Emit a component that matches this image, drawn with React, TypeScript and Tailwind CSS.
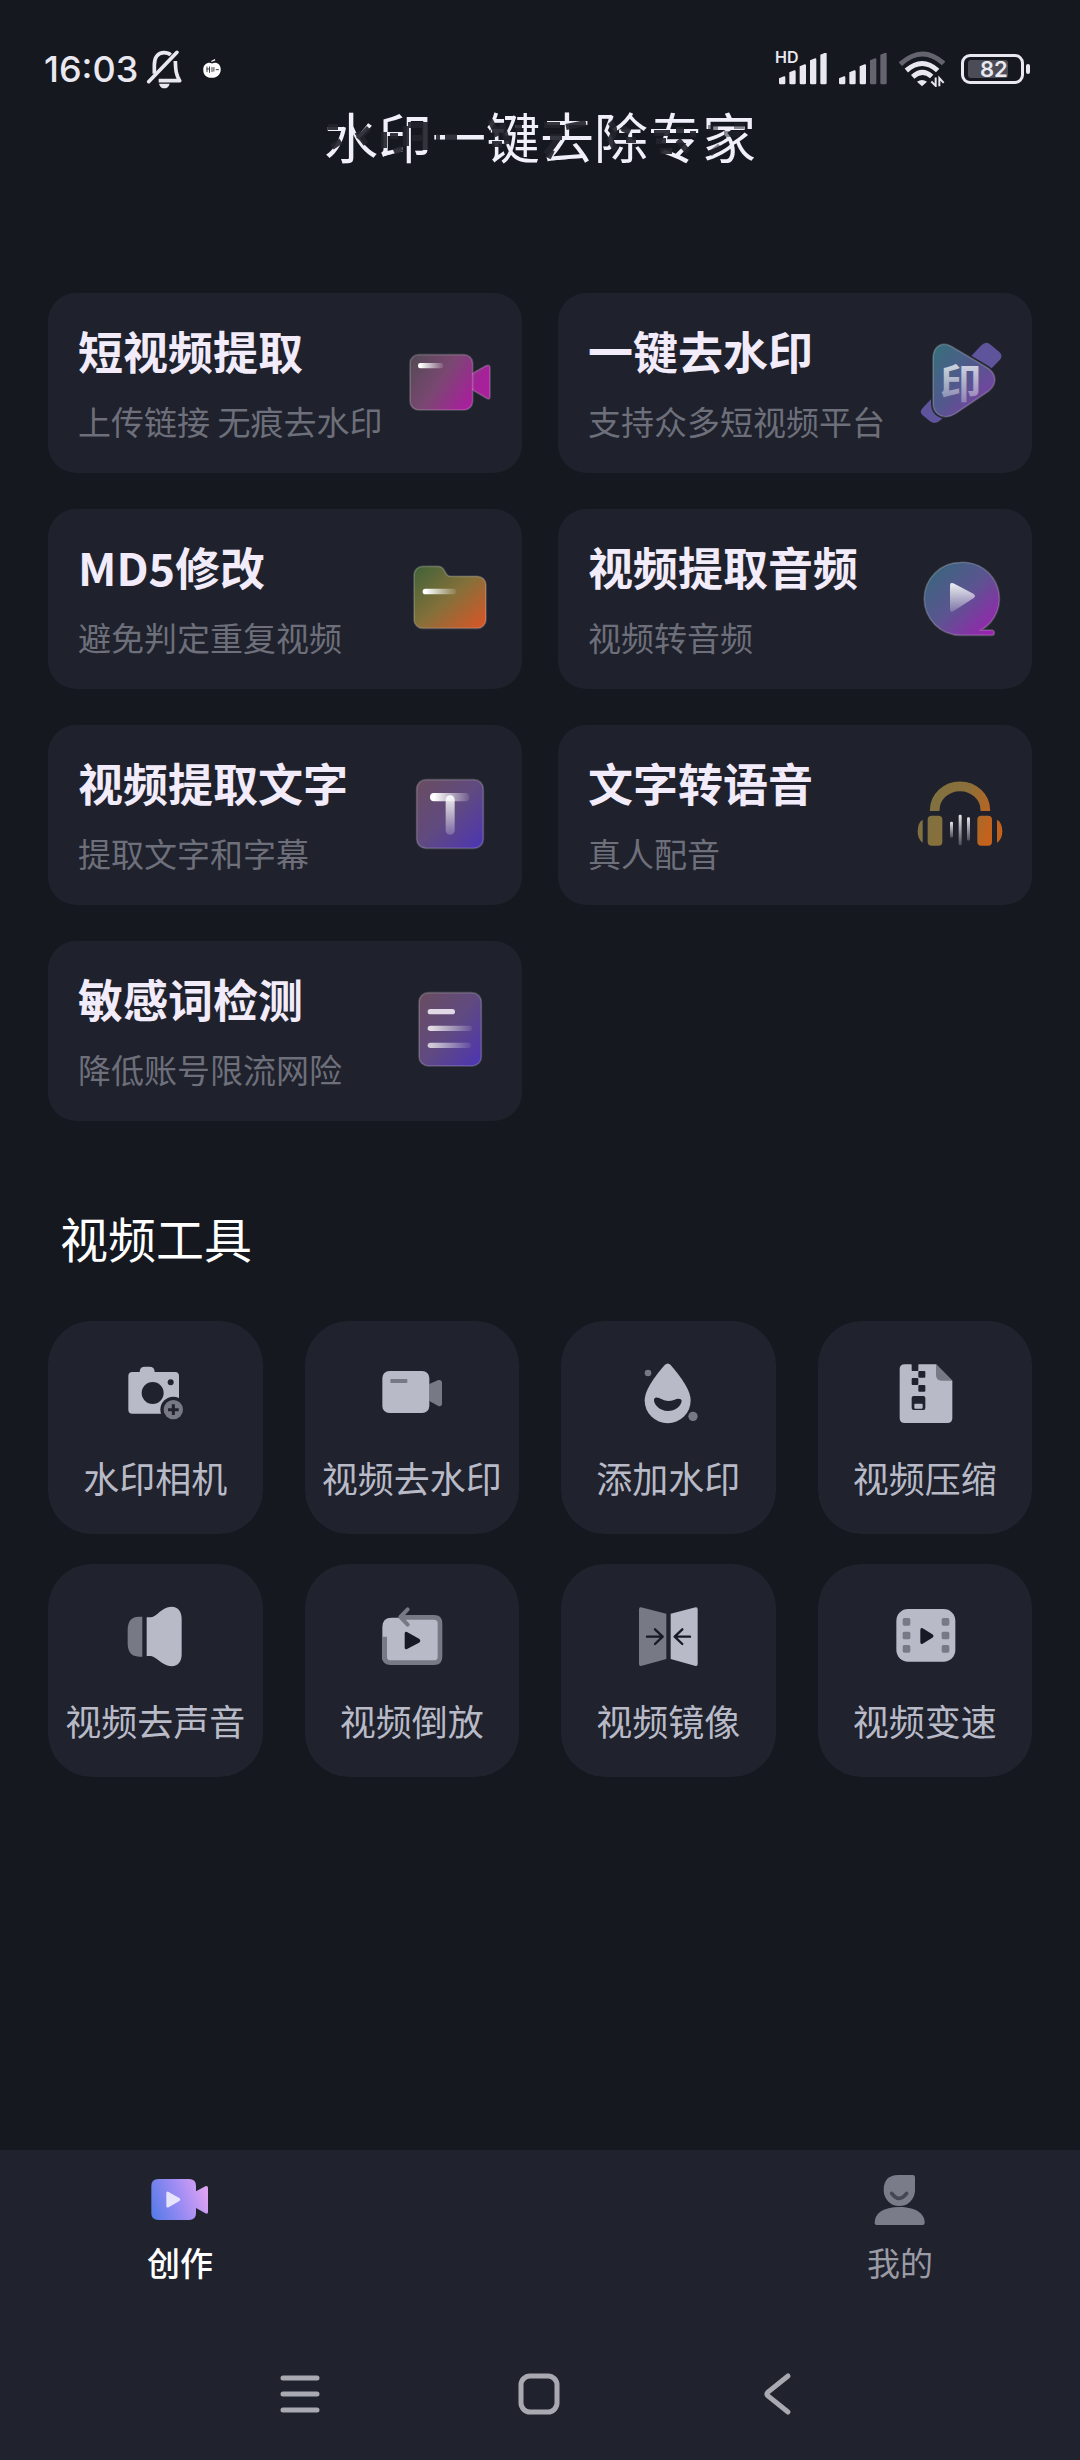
import React from "react";

type Item = { title: string; desc?: string; icon: React.ReactNode };

const LIGHT = "#b8bac7";
const DIM = "#777985";
const TILE = "#20222d";

const Gradient = ({ id, stops }: { id: string; stops: string[] }) => (
  <linearGradient id={id} x1="0" y1="0" x2="1" y2="1">
    {stops.map((color, i) => (
      <stop key={color} offset={i / (stops.length - 1)} stopColor={color} />
    ))}
  </linearGradient>
);

const FeatureSvg = ({ children }: { children: React.ReactNode }) => (
  <svg viewBox="0 0 264 264" className="size-22 shrink-0" aria-hidden="true">
    <defs>
      <linearGradient id="shine" x1="0" x2="1">
        <stop offset="0.1" stopColor="#fff" />
        <stop offset="1" stopColor="#fff" stopOpacity="0.1" />
      </linearGradient>
      <linearGradient id="shineDown" x1="0" y1="0" x2="0" y2="1">
        <stop offset="0" stopColor="#fff" stopOpacity="0.9" />
        <stop offset="1" stopColor="#fff" stopOpacity="0.2" />
      </linearGradient>
    </defs>
    {children}
  </svg>
);

const ToolSvg = ({ children }: { children: React.ReactNode }) => (
  <svg viewBox="0 0 216 216" className="size-18" aria-hidden="true">
    {children}
  </svg>
);

const edge = { stroke: "#fff", strokeOpacity: 0.2, strokeWidth: 5 };

const features: Item[] = [
  {
    title: "短视频提取",
    desc: "上传链接 无痕去水印",
    icon: (
      <FeatureSvg>
        <defs>
          <linearGradient id="camera" gradientUnits="userSpaceOnUse" x1="20" y1="50" x2="230" y2="190">
            <stop offset="0" stopColor="#554a55" />
            <stop offset="0.45" stopColor="#7a4772" />
            <stop offset="0.85" stopColor="#a6219a" />
          </linearGradient>
        </defs>
        <path
          d="M38 50H174A26 26 0 0 1 200 76V106L240 83Q252 79 252 90V176Q252 186 242 181L200 156V190A26 26 0 0 1 174 216H38A26 26 0 0 1 12 190V76A26 26 0 0 1 38 50Z"
          fill="url(#camera)"
          {...edge}
        />
        <path d="M200 106V156" {...edge} />
        <rect x="36" y="75" width="76" height="16" rx="7" fill="url(#shine)" />
      </FeatureSvg>
    ),
  },
  {
    title: "一键去水印",
    desc: "支持众多短视频平台",
    icon: (
      <FeatureSvg>
        <defs>
          <Gradient id="stamp" stops={["#35707a", "#54578e", "#8a37ae"]} />
        </defs>
        <path
          d="M22 208L196 22Q210 8 224 20L250 42Q262 53 252 65L74 246Q58 262 42 250L20 232Q8 222 22 208Z"
          fill="#5d549b"
        />
        <path
          d="M51 62C51 24 78 8 108 26L212 88C246 108 243 143 214 162L118 227C86 247 51 232 51 196Z"
          fill="url(#stamp)"
          stroke="#1f212c"
          strokeWidth="12"
        />
        <path
          d="M51 62C51 24 78 8 108 26L212 88C246 108 243 143 214 162L118 227C86 247 51 232 51 196Z"
          fill="url(#stamp)"
          {...edge}
        />
        <text
          x="134"
          y="181"
          textAnchor="middle"
          fontSize="124"
          fill="url(#shineDown)"
          className="font-bold"
        >
          印
        </text>
      </FeatureSvg>
    ),
  },
  {
    title: "MD5修改",
    desc: "避免判定重复视频",
    icon: (
      <FeatureSvg>
        <defs>
          <Gradient id="folder" stops={["#3f6238", "#85703a", "#dc5426"]} />
        </defs>
        <path
          d="M50 37H96Q108 37 114 48L120 58Q124 67 135 67H214A26 26 0 0 1 240 93V197A26 26 0 0 1 214 223H50A26 26 0 0 1 24 197V63A26 26 0 0 1 50 37Z"
          fill="url(#folder)"
          {...edge}
        />
        <rect x="50" y="104" width="100" height="17" rx="8" fill="url(#shine)" />
      </FeatureSvg>
    ),
  },
  {
    title: "视频提取音频",
    desc: "视频转音频",
    icon: (
      <FeatureSvg>
        <defs>
          <Gradient id="disc" stops={["#33697a", "#5b5490", "#a31bb4"]} />
        </defs>
        <path
          d="M134 25A109 109 0 0 1 196 228H228Q235 229 235 237Q235 244 228 244H134A109 109 0 0 1 134 25Z"
          fill="url(#disc)"
          {...edge}
        />
        <path d="M112 88L172 119Q182 126 172 133L112 172Q102 178 102 166V94Q102 84 112 88Z" fill="url(#shineDown)" />
      </FeatureSvg>
    ),
  },
  {
    title: "视频提取文字",
    desc: "提取文字和字幕",
    icon: (
      <FeatureSvg>
        <defs>
          <Gradient id="caption" stops={["#6a4d60", "#604a80", "#4c34b4"]} />
        </defs>
        <rect x="32" y="29" width="200" height="206" rx="28" fill="url(#caption)" {...edge} />
        <rect x="119" y="76" width="27" height="118" rx="13" fill="url(#shineDown)" />
        <rect x="72" y="69" width="118" height="25" rx="12" fill="url(#shine)" />
      </FeatureSvg>
    ),
  },
  {
    title: "文字转语音",
    desc: "真人配音",
    icon: (
      <FeatureSvg>
        <defs>
          <linearGradient id="phones" gradientUnits="userSpaceOnUse" x1="10" y1="100" x2="250" y2="180">
            <stop offset="0" stopColor="#7b7242" />
            <stop offset="0.5" stopColor="#8c6f3a" />
            <stop offset="0.9" stopColor="#c4621c" />
          </linearGradient>
        </defs>
        <path d="M56 123V121A76 72 0 0 1 208 121V123" fill="none" stroke="url(#phones)" strokeWidth="29" />
        <g fill="url(#phones)">
          <rect x="35" y="137" width="44" height="90" rx="12" />
          <rect x="184" y="137" width="44" height="90" rx="12" />
          <path d="M20 149V218Q5 208 5 184Q5 158 20 149Z" />
          <path d="M243 149V218Q259 208 259 184Q259 158 243 149Z" />
        </g>
        <g fill="url(#shineDown)">
          <rect x="102" y="155" width="9" height="48" rx="4" />
          <rect x="128" y="134" width="9" height="92" rx="4" />
          <rect x="153" y="142" width="9" height="70" rx="4" />
        </g>
      </FeatureSvg>
    ),
  },
  {
    title: "敏感词检测",
    desc: "降低账号限流网险",
    icon: (
      <FeatureSvg>
        <defs>
          <Gradient id="doc" stops={["#6a4d60", "#604a80", "#4c34b4"]} />
        </defs>
        <rect x="39" y="20" width="187" height="220" rx="28" fill="url(#doc)" {...edge} />
        <g fill="url(#shine)">
          <rect x="65" y="69" width="82" height="16" rx="8" fill="#e2d9e6" />
          <rect x="65" y="119" width="133" height="16" rx="8" fillOpacity="0.8" />
          <rect x="65" y="170" width="130" height="16" rx="8" fillOpacity="0.7" />
        </g>
      </FeatureSvg>
    ),
  },
];

const tools: Item[] = [
  {
    title: "水印相机",
    icon: (
      <ToolSvg>
        <path
          d="M40 45H62Q62 29 78 29H91Q107 29 107 45H168Q180 45 180 57V158Q180 170 168 170H40Q28 170 28 158V57Q28 45 40 45Z"
          fill={LIGHT}
        />
        <circle cx="101" cy="108" r="33" fill={TILE} />
        <circle cx="155" cy="76" r="9" fill={TILE} />
        <circle cx="163" cy="158" r="39" fill={TILE} />
        <circle cx="163" cy="158" r="29" fill={DIM} />
        <path d="M163 142V174M147 158H179" stroke={TILE} strokeWidth="9" />
      </ToolSvg>
    ),
  },
  {
    title: "视频去水印",
    icon: (
      <ToolSvg>
        <path d="M160 81L187 69Q198 67 198 78V139Q198 150 187 147L160 132Z" fill={DIM} />
        <rect x="19" y="42" width="141" height="126" rx="21" fill={LIGHT} />
        <rect x="43" y="66" width="51" height="12" rx="2" fill={DIM} />
      </ToolSvg>
    ),
  },
  {
    title: "添加水印",
    icon: (
      <ToolSvg>
        <circle cx="48" cy="48" r="10" fill={DIM} />
        <circle cx="183" cy="178" r="14" fill={DIM} />
        <path
          d="M98 24Q107 15 116 24C138 50 176 96 176 130A69 69 0 0 1 38 130C38 96 76 50 98 24Z"
          fill={LIGHT}
        />
        <path
          d="M66 126C70 118 80 121 90 127C102 134 114 133 126 129C138 123 149 125 149 132C147 148 130 162 107 162C84 161 64 144 66 126Z"
          fill={TILE}
        />
      </ToolSvg>
    ),
  },
  {
    title: "视频压缩",
    icon: (
      <ToolSvg>
        <path d="M47 22H141L190 71V183Q190 198 175 198H47Q32 198 32 183V37Q32 22 47 22Z" fill={LIGHT} />
        <path d="M141 22L190 71H158Q141 71 141 54Z" fill={DIM} />
        <g fill={TILE}>
          <rect x="68" y="20" width="20" height="22" rx="2" />
          <rect x="88" y="42" width="21" height="20" rx="3" />
          <rect x="68" y="63" width="20" height="21" rx="3" />
          <rect x="88" y="84" width="21" height="20" rx="3" />
          <rect x="68" y="117" width="41" height="42" rx="6" />
        </g>
        <rect x="76" y="140" width="25" height="15" rx="3" fill={LIGHT} />
      </ToolSvg>
    ),
  },
  {
    title: "视频去声音",
    icon: (
      <ToolSvg>
        <path d="M70 50V170H60Q26 170 26 130V90Q26 50 60 50Z" fill={DIM} />
        <path
          d="M83 52H96C114 50 126 22 158 20C178 20 188 36 188 56V163C188 183 178 199 158 199C128 196 114 171 96 168H83Z"
          fill={LIGHT}
        />
      </ToolSvg>
    ),
  },
  {
    title: "视频倒放",
    icon: (
      <ToolSvg>
        <path d="M47 53H178Q192 53 192 67V174Q192 188 178 188H33Q19 188 19 174V81Q19 53 47 53Z" fill={LIGHT} />
        <g fill="none" stroke={DIM} strokeLinejoin="round">
          <path d="M74 52H174Q192 52 192 70V170Q192 188 174 188H44Q26 188 26 170V110" strokeWidth="14" />
          <path d="M95 28L73 51L95 74" strokeWidth="12" strokeLinecap="round" />
        </g>
        <path d="M93 96L129 116Q137 122 129 128L93 147Q86 150 86 142V101Q86 93 93 96Z" fill="#171a24" />
      </ToolSvg>
    ),
  },
  {
    title: "视频镜像",
    icon: (
      <ToolSvg>
        <path d="M27 22L103 41V177L27 198Q21 199 21 192V28Q21 21 27 22Z" fill={DIM} />
        <path d="M191 22L116 41V177L191 198Q197 199 197 192V28Q197 21 191 22Z" fill={LIGHT} />
        <g fill="none" stroke="#171a24" strokeWidth="7" strokeLinecap="round" strokeLinejoin="round">
          <path d="M45 110H92M69 88L92 110L69 132" />
          <path d="M174 110H128M151 88L128 110L151 132" />
        </g>
      </ToolSvg>
    ),
  },
  {
    title: "视频变速",
    icon: (
      <ToolSvg>
        <rect x="22" y="27" width="177" height="158" rx="35" fill={LIGHT} />
        {[54, 95, 135].map((y) => (
          <g key={y} fill={DIM}>
            <rect x="41" y={y} width="23" height="23" rx="5" />
            <rect x="158" y={y} width="23" height="23" rx="5" />
          </g>
        ))}
        <path d="M101 85L130 103Q137 108 130 113L101 131Q94 134 94 126V90Q94 82 101 85Z" fill="#171a24" />
      </ToolSvg>
    ),
  },
];

const SignalBars = ({ level }: { level: number }) => (
  <svg viewBox="0 0 144 96" className="h-8 w-12" aria-hidden="true">
    {[22, 40, 58, 76, 93].map((height, i) => (
      <path
        key={height}
        d={`M${i * 31} ${98 - height}L${i * 31 + 15} ${92 - height}Q${i * 31 + 19} ${91 - height} ${i * 31 + 19} ${96 - height}V90Q${i * 31 + 19} 94 ${i * 31 + 15} 94H${i * 31 + 4}Q${i * 31} 94 ${i * 31} 90Z`}
        fill={i < level ? "#e9e8f0" : "#64646f"}
      />
    ))}
  </svg>
);

const StatusBar = () => (
  <div className="flex h-[42px] items-center justify-between pr-[50px] pl-11 font-[Inter,sans-serif] text-[#e9e8f0]">
    <div className="flex items-center">
      <span className="text-[36px] leading-[42px] font-medium">16:03</span>
      <svg viewBox="0 0 108 120" className="ml-2 h-10 w-9" fill="none" stroke="currentColor" strokeWidth="11" aria-hidden="true">
        <path d="M25 74V48C25 24 36 11 54 11C62 11 69 13 74 18" />
        <path d="M88 36C89 64 90 78 101 95H38" strokeLinejoin="round" />
        <path d="M8 98L93 10" strokeLinecap="round" />
        <path d="M39 104H71Q67 118 55 118Q43 118 39 104Z" fill="currentColor" stroke="none" />
      </svg>
      <svg viewBox="0 0 60 64" className="ml-5 h-5 w-5" aria-hidden="true">
        <path d="M30 14C20 8 2 14 2 34C2 52 14 60 30 60C46 60 58 48 58 34C58 16 44 8 30 14Z" fill="#fff" />
        <path d="M28 8L40 2" stroke="#fff" strokeWidth="4" />
        <path d="M14 24V42M22 24V44M12 32H24M30 26V42M36 26V40M42 34H52" stroke="#33343c" strokeWidth="3" />
      </svg>
    </div>
    <div className="flex items-center">
      <div className="relative mr-3">
        <SignalBars level={5} />
        <span className="absolute -top-1 -left-1 text-[16px] leading-[16px] font-semibold">HD</span>
      </div>
      <SignalBars level={3} />
      <svg viewBox="0 0 138 105" className="ml-3 h-9 w-[46px]" fill="none" stroke="currentColor" strokeWidth="15" aria-hidden="true">
        <path d="M4 38Q70 -22 134 36" stroke="#64646f" />
        <path d="M22 57Q70 15 116 57" />
        <path d="M41 76Q70 50 98 75" />
        <path d="M54 91Q69 80 84 91L69 104Z" fill="currentColor" stroke="none" />
        <path d="M110 78V103L97 90M121 104V80L134 94" strokeWidth="6" />
      </svg>
      <div className="ml-4 flex h-[30px] w-[63px] items-center rounded-[9px] border-3 border-[#e9e8f0] px-1">
        <span className="h-[18px] w-10 rounded-[3px] bg-[#4c4c56] pl-3 text-[22px] leading-[18px] font-semibold">
          82
        </span>
      </div>
      <span className="ml-[2px] h-[10px] w-1 rounded-full bg-[#e9e8f0]" />
    </div>
  </div>
);

// dark strokes that are wiped over the app title
const TitleWipe = () => (
  <svg
    viewBox="0 0 432 60"
    className="absolute inset-0 size-full"
    fill="none"
    stroke="#24252b"
    strokeOpacity="0.92"
    strokeWidth="6"
    aria-hidden="true"
  >
    <path d="M4 21H14M8 41L17 35M34 33L45 22M33 26L42 38" />
    <path d="M60 26V42M66 30H74M70 46L78 42M82 20V40M84 19H101V44M88 32H98" />
    <path d="M121 31H133M112 31H116" />
    <path d="M166 14L174 30M168 24H180M178 18L184 38M168 38H178M192 22H198" />
    <path d="M220 19H236M242 21L262 17M226 31H238M222 48L236 30M228 44L224 52" />
    <path d="M286 16Q294 24 286 34L292 44M302 34H312M306 26L298 22" />
    <path d="M330 27H346M332 35H342M352 24H360M354 34L364 46M366 28H372M336 45H348" />
    <path d="M384 22H394M400 28H416M396 40L386 48M410 20H420" strokeOpacity="0.5" />
  </svg>
);

const App = () => {
  return (
    <div className="flex min-h-screen flex-col bg-[#15181f] pt-12 font-[Inter,'Noto_Sans_CJK_SC',sans-serif]">
      <StatusBar />
      <header className="mt-4 flex justify-center">
        <h1 className="relative font-['Noto_Sans_CJK_SC',sans-serif] text-[54px] leading-[60px] text-[#f1effa]">
          水印一键去除专家
          <TitleWipe />
        </h1>
      </header>

      <main className="flex-1 px-12 pt-[127px] pb-12 font-['Noto_Sans_CJK_SC',sans-serif]">
        <section className="grid grid-cols-2 gap-9">
          {features.map((item) => (
            <button
              key={item.title}
              className="flex items-center justify-between rounded-[28px] bg-[#1f212c] pt-7 pr-7 pb-[30px] pl-[30px] text-left"
            >
              <span className="flex flex-col gap-[18px] whitespace-nowrap">
                <span className="text-[45px] leading-[60px] font-bold text-[#f1ebfa]">{item.title}</span>
                <span className="text-[33px] leading-[44px] text-[#6d6f7a]">{item.desc}</span>
              </span>
              {item.icon}
            </button>
          ))}
        </section>

        <h2 className="mt-[86px] pl-3 text-[48px] leading-[60px] text-white">视频工具</h2>
        <section className="mt-[54px] grid grid-cols-4 gap-x-[42px] gap-y-[30px]">
          {tools.map((item) => (
            <button
              key={item.title}
              className="flex flex-col items-center gap-6 rounded-[44px] bg-[#20222d] pt-9 pb-[33px] whitespace-nowrap"
            >
              {item.icon}
              <span className="text-[36px] leading-[48px] text-[#b8bac7]">{item.title}</span>
            </button>
          ))}
        </section>
      </main>

      <footer className="bg-[#20222d] pt-5 pb-[42px] font-['Noto_Sans_CJK_SC',sans-serif]">
        <nav className="grid grid-cols-3">
          <a href="#create" className="flex flex-col items-center gap-3 text-white">
            <svg viewBox="0 0 180 180" className="size-15" aria-hidden="true">
              <defs>
                <linearGradient id="tab" gradientUnits="userSpaceOnUse" x1="10" y1="130" x2="170" y2="70">
                  <stop offset="0" stopColor="#5a7ce8" />
                  <stop offset="0.5" stopColor="#9b8bf3" />
                  <stop offset="1" stopColor="#dca3f3" />
                </linearGradient>
              </defs>
              <path
                d="M25 27H117Q138 27 138 48V64L166 49Q174 46 174 54V126Q174 134 166 130L138 114V129Q138 150 117 150H25Q4 150 4 129V48Q4 27 25 27Z"
                fill="url(#tab)"
              />
              <path d="M56 66L88 84Q94 88 88 93L56 112Q49 115 49 107V70Q49 62 56 66Z" fill="#e6e4fb" />
            </svg>
            <span className="text-[33px] leading-[40px] font-medium">创作</span>
          </a>
          <a href="#mine" className="col-start-3 flex flex-col items-center gap-3 text-[#9a9ba5]">
            <svg viewBox="0 0 180 180" className="size-15" fill="#7b7c8a" aria-hidden="true">
              <path d="M85 15H128Q135 15 135 22V61A47 47 0 0 1 41 61Q41 15 85 15Z" />
              <path d="M65 70Q87 100 110 70" fill="none" stroke="#454754" strokeWidth="11" strokeLinecap="round" />
              <path d="M14 158C14 130 40 111 88 111C136 111 164 130 164 158Q164 165 156 165H22Q14 165 14 158Z" />
            </svg>
            <span className="text-[33px] leading-[40px]">我的</span>
          </a>
        </nav>

        <div className="mt-[88px] grid grid-cols-3 justify-items-center px-[180px]">
          <button aria-label="菜单">
            <svg viewBox="0 0 48 48" className="size-12" stroke="#a9aab1" strokeWidth="5" strokeLinecap="round">
              <path d="M7 8H41M7 24H41M7 40H41" />
            </svg>
          </button>
          <button aria-label="主页">
            <svg viewBox="0 0 48 48" className="size-12" fill="none" stroke="#a9aab1" strokeWidth="5">
              <rect x="5" y="6" width="36" height="36" rx="9" />
            </svg>
          </button>
          <button aria-label="返回">
            <svg viewBox="0 0 48 48" className="size-12" fill="none" stroke="#a9aab1" strokeWidth="5" strokeLinecap="round">
              <path d="M32 6L12 22Q10 24 12 26L32 42" />
            </svg>
          </button>
        </div>
      </footer>
    </div>
  );
};

export default App;
